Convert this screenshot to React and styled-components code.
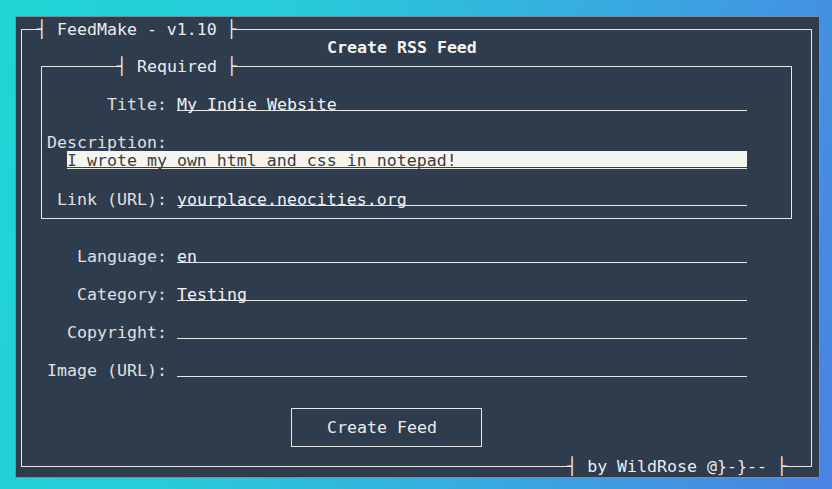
import React from "react";
import styled, { createGlobalStyle } from "styled-components";

const GlobalStyle = createGlobalStyle`
  html, body {
    margin: 0;
    padding: 0;
  }
  body {
    width: 832px;
    height: 489px;
    overflow: hidden;
    background: linear-gradient(105deg, #1fd5d5 0%, #27cbda 30%, #38a9e0 65%, #4a82e3 100%);
  }
`;

const Screen = styled.div`
  width: 832px;
  height: 489px;
  box-sizing: border-box;
  padding: 16px 0 0 15px;
`;

const Terminal = styled.div`
  width: 805px;
  height: 462px;
  box-sizing: border-box;
  border: 1px solid rgba(255, 255, 255, 0.4);
  background: #2e3c4d;
  padding: 3px 7px 0 5px;
  color: #e6e6e6;
  font-family: "DejaVu Sans Mono", monospace;
  font-size: 16.6px;
  line-height: 19px;
`;

const Frame = styled.fieldset`
  margin: ${(p) => p.$margin || 0};
  padding: ${(p) => p.$padding || 0};
  border: 1px solid #e6e6e6;
  min-width: 0;
  width: ${(p) => (p.$width ? `${p.$width}px` : "auto")};
  box-sizing: border-box;
`;

const Legend = styled.legend`
  padding: 0;
  margin-left: ${(p) => p.$offset}px;
  line-height: 19px;
  height: 19px;
  white-space: pre;
  color: #ececec;
`;

const Heading = styled.h1`
  margin: -1px 0 0;
  padding-left: 305px;
  font-size: inherit;
  line-height: 19px;
  font-weight: bold;
  color: #f4f4f4;
`;

const Blank = styled.div`
  height: 19px;
`;

const Row = styled.div`
  display: flex;
  height: 19px;
`;

const Label = styled.label`
  width: ${(p) => p.$width}px;
  margin-right: 10px;
  text-align: right;
  white-space: pre;
  color: #e0e0e0;
`;

const Field = styled.span`
  display: block;
  width: 570px;
  height: 16px;
  box-sizing: border-box;
  border-bottom: 1px solid #e8e8e8;
  white-space: pre;
  color: #f2f2f2;
`;

const StackLabel = styled.div`
  padding-left: 5px;
  height: 19px;
  color: #e0e0e0;
`;

const FocusField = styled.div`
  margin: 0 0 2px 25px;
  width: 680px;
  height: 18px;
  box-sizing: border-box;
  border-bottom: 1px solid #e8e8e8;
`;

const FocusInput = styled.span`
  display: block;
  margin-top: -1px;
  height: 16px;
  background: #f5f5ef;
  color: #3a3d42;
  white-space: pre;
  text-decoration: underline;
  text-decoration-thickness: 1px;
`;

const Options = styled.div`
  display: flex;
  flex-direction: column;
  gap: 19px;
  margin-top: 28px;
`;

const Button = styled.button`
  display: block;
  margin: 28px 0 0 269px;
  width: 191px;
  height: 39px;
  box-sizing: border-box;
  border: 1px solid #e6e6e6;
  background: transparent;
  color: #ececec;
  font: inherit;
  line-height: 19px;
  text-align: left;
  padding: 0 0 0 35px;
  cursor: pointer;
`;

const Footer = styled.div`
  display: flex;
  justify-content: flex-end;
  height: 19px;
  margin: 10px 24px -10px 0;
`;

const FooterTag = styled.span`
  background: #2e3c4d;
  white-space: pre;
  color: #ececec;
`;

const required = [
  { label: "Title:", value: "My Indie Website" },
  { label: "Link (URL):", value: "yourplace.neocities.org" },
];

const optional = [
  { label: "Language:", value: "en" },
  { label: "Category:", value: "Testing" },
  { label: "Copyright:", value: "" },
  { label: "Image (URL):", value: "" },
];

const FieldRow = ({ label, value, labelWidth }) => (
  <Row>
    <Label $width={labelWidth}>{label}</Label>
    <Field>{value}</Field>
  </Row>
);

export default function App() {
  return (
    <>
      <GlobalStyle />
      <Screen>
        <Terminal>
          <Frame $width={791}>
            <Legend $offset={15}>┤ FeedMake - v1.10 ├</Legend>
            <Heading>Create RSS Feed</Heading>
            <Frame $margin="0 19px" $padding="0 0 9px 0">
              <Legend $offset={75}>┤ Required ├</Legend>
              <Blank />
              <FieldRow {...required[0]} labelWidth={125} />
              <Blank />
              <StackLabel>Description:</StackLabel>
              <FocusField>
                <FocusInput>I wrote my own html and css in notepad!</FocusInput>
              </FocusField>
              <Blank />
              <FieldRow {...required[1]} labelWidth={125} />
            </Frame>
            <Options>
              {optional.map((f) => (
                <FieldRow key={f.label} {...f} labelWidth={145} />
              ))}
            </Options>
            <Button>Create Feed</Button>
            <Footer>
              <FooterTag>┤ by WildRose @{"}"}-{"}"}-- ├</FooterTag>
            </Footer>
          </Frame>
        </Terminal>
      </Screen>
    </>
  );
}
